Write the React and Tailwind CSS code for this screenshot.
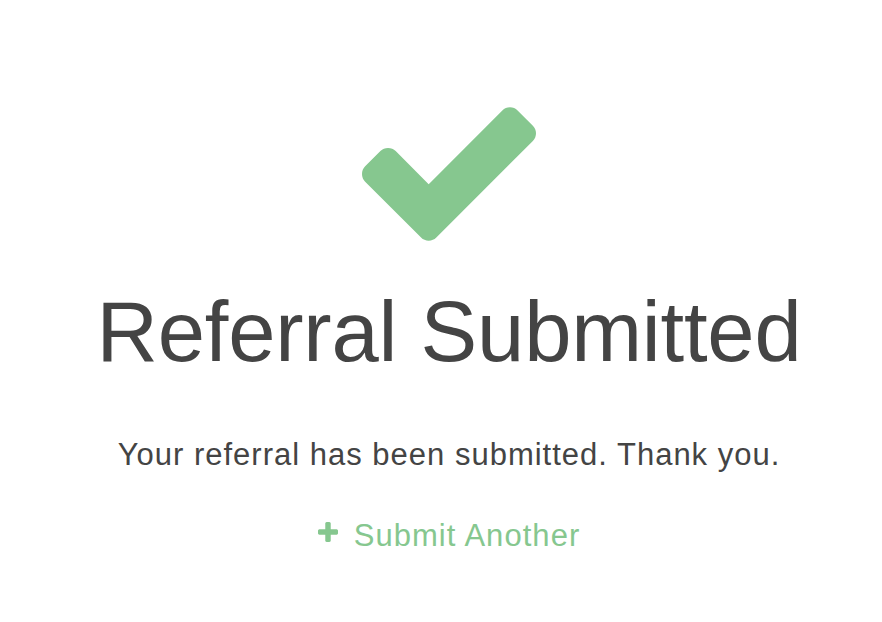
export default function App() {
  return (
    <div className="min-h-[622px] w-full bg-white pl-4 flex flex-col items-center font-['Liberation_Sans',Arial,sans-serif] text-[#444444]">
      <svg
        className="mt-[107px] block"
        width="174"
        height="134"
        viewBox="121 334 1550 1188"
        aria-hidden="true"
      >
        <path
          fill="#86c78f"
          d="M1671 566q0 40-28 68l-724 724-136 136q-28 28-68 28t-68-28l-136-136-362-362q-28-28-28-68t28-68l136-136q28-28 68-28t68 28l294 295 656-657q28-28 68-28t68 28l136 136q28 28 28 68z"
        />
      </svg>
      <h1 className="mt-[48px] text-[85px] leading-none font-normal whitespace-nowrap tracking-[-0.2px]">
        Referral Submitted
      </h1>
      <p className="mt-[65px] text-[31px] leading-none tracking-[1px] whitespace-nowrap">
        Your referral has been submitted. Thank you.
      </p>
      <a
        href="#"
        className="mt-[50px] flex items-center gap-[16px] text-[31px] leading-none tracking-[1.05px] text-[#86c78f] whitespace-nowrap no-underline"
      >
        <svg width="20" height="20" viewBox="0 192 1408 1408" aria-hidden="true" className="block -mt-[7px]">
          <path
            fill="#86c78f"
            d="M1408 800v192q0 40-28 68t-68 28h-416v416q0 40-28 68t-68 28h-192q-40 0-68-28t-28-68v-416h-416q-40 0-68-28t-28-68v-192q0-40 28-68t68-28h416v-416q0-40 28-68t68-28h192q40 0 68 28t28 68v416h416q40 0 68 28t28 68z"
          />
        </svg>
        <span>Submit Another</span>
      </a>
    </div>
  );
}
